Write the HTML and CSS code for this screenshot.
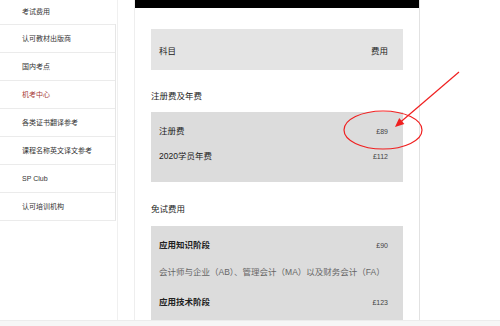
FILE: index.html
```html
<!DOCTYPE html>
<html lang="zh-CN">
<head>
    <meta charset="UTF-8">
    <meta name="viewport" content="width=device-width, initial-scale=1.0">
    <title>考试费用</title>
    <link rel="stylesheet" href="styles.css">
</head>
<body>
    <div class="page">
        <aside class="sidebar">
            <div class="side-title">考试费用</div>
            <ul class="side-menu">
                <li>认可教材出版商</li>
                <li>国内考点</li>
                <li class="active">机考中心</li>
                <li>各类证书翻译参考</li>
                <li>课程名称英文译文参考</li>
                <li>SP Club</li>
                <li>认可培训机构</li>
            </ul>
        </aside>
        <main class="content">
            <div class="topbar"></div>
            <div class="fee-head">
                <span>科目</span>
                <span>费用</span>
            </div>
            <h3 class="section-title">注册费及年费</h3>
            <div class="fee-box">
                <div class="fee-row">
                    <span>注册费</span>
                    <span class="price">£89</span>
                </div>
                <div class="fee-row">
                    <span>2020学员年费</span>
                    <span class="price">£112</span>
                </div>
            </div>
            <h3 class="section-title">免试费用</h3>
            <div class="fee-box">
                <div class="fee-row">
                    <span class="stage">应用知识阶段</span>
                    <span class="price">£90</span>
                </div>
                <div class="fee-desc">会计师与企业（AB）、管理会计（MA）以及财务会计（FA）</div>
                <div class="fee-row next">
                    <span class="stage">应用技术阶段</span>
                    <span class="price">£123</span>
                </div>
            </div>
        </main>
    </div>
    <div class="hscroll"></div>

    <svg class="markup" width="500" height="326" viewBox="0 0 500 326">
        <ellipse cx="383" cy="130" rx="39" ry="19" fill="none" stroke="#f02020" stroke-width="1.2"/>
        <line x1="459" y1="72" x2="400" y2="122.5" stroke="#f02020" stroke-width="1.2"/>
        <polygon points="395,127 404.4,124.1 399.2,118.1" fill="#f02020"/>
    </svg>
</body>
</html>
```

FILE: styles.css
```css
body {
    margin: 0;
    font-family: "Liberation Sans", "Noto Sans CJK SC", sans-serif;
    color: #222;
    background: #fff;
    overflow: hidden;
}
.page {
    display: flex;
    height: 320px;
    overflow: hidden;
}
.sidebar {
    width: 117px;
    border-right: 1px solid #f0f0f0;
    font-size: 7px;
    color: #333;
}
.side-title {
    height: 24px;
    line-height: 24px;
    padding-left: 22px;
}
.side-menu {
    list-style: none;
    margin: 0;
    padding: 0;
    width: 115px;
    border-right: 1px solid #e6e6e6;
    border-bottom: 1px solid #ebebeb;
}
.side-menu li {
    height: 27px;
    line-height: 27px;
    padding-left: 22px;
    border-top: 1px solid #ebebeb;
}
.side-menu li.active {
    color: #a8403a;
}
.content {
    margin-left: 16px;
    width: 284px;
    border-left: 1px solid #eeeeee;
    border-right: 1px solid #e2e2e2;
    font-size: 8.5px;
}
.topbar {
    height: 8px;
    background: #000;
}
.fee-head {
    display: flex;
    justify-content: space-between;
    align-items: center;
    height: 41px;
    margin: 21px 16px 0;
    padding: 0 15px 0 8px;
    background: #e4e4e4;
}
.section-title {
    margin: 20px 16px 10px;
    font-size: 8.5px;
    font-weight: normal;
    line-height: 12px;
}
.fee-box {
    margin: 0 16px;
    padding: 7px 15px 13px 8px;
    background: #dcdcdc;
}
.fee-box + .section-title {
    margin-top: 21px;
    margin-bottom: 11px;
}
.fee-row {
    display: flex;
    justify-content: space-between;
    height: 25px;
    line-height: 25px;
}
.fee-row.next {
    margin-top: 5px;
}
.price {
    color: #444;
    font-size: 7px;
}
.stage {
    font-weight: 600;
}
.fee-desc {
    margin-top: 2px;
    line-height: 25px;
    color: #666;
}
.hscroll {
    height: 5px;
    border-top: 1px solid #ececec;
    background: #f6f6f6;
}
.markup {
    position: absolute;
    left: 0;
    top: 0;
    pointer-events: none;
}
```
